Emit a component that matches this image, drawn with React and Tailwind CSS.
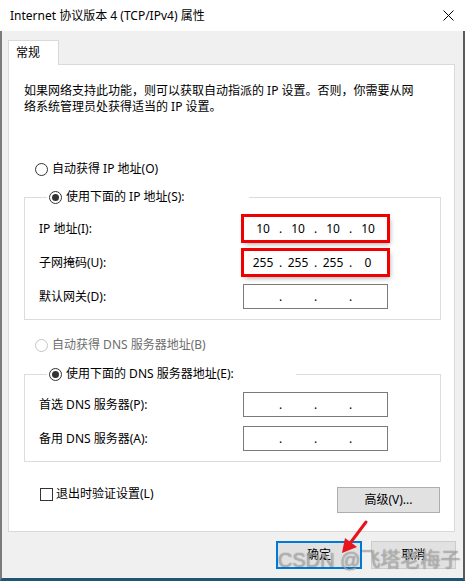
import React from 'react';

function Radio({ checked, disabled }) {
  return (
    <span
      className={
        'w-[13px] h-[13px] rounded-full border bg-white flex items-center justify-center shrink-0 ' +
        (disabled ? 'border-[#c4c4c4]' : 'border-[#333333]')
      }
    >
      {checked && <span className="w-[7px] h-[7px] rounded-full bg-[#333333]" />}
    </span>
  );
}

function IpBox({ values, red }) {
  const segs = values || ['', '', '', ''];
  return (
    <div
      className={
        'w-[145px] h-[25px] border border-[#7a7a7a] bg-white flex items-center px-[4px] ' +
        (red ? 'outline-3 outline-[#f00000] -outline-offset-1 shadow-[2px_3px_5px_rgba(0,0,0,0.35)]' : '')
      }
    >
      {segs.map((v, i) => (
        <React.Fragment key={i}>
          <span className="w-[30px] text-center leading-[16px]">{v}</span>
          {i < 3 && <span className="w-[5px] text-center leading-[16px]">.</span>}
        </React.Fragment>
      ))}
    </div>
  );
}

function Row({ label, values, red }) {
  return (
    <div className="flex items-center h-[25px]">
      <span className="w-[204px] leading-[16px]">{label}</span>
      <IpBox values={values} red={red} />
    </div>
  );
}

export default function App() {
  return (
    <div className="w-[465px] h-[581px] flex flex-col bg-[#f0f0f0] text-[12px] text-black font-['Noto_Sans','Noto_Sans_CJK_SC',sans-serif] relative overflow-hidden">
      <div className="h-[31px] bg-white flex items-center justify-between pl-[10px] pr-[11px] shrink-0">
        <span className="leading-[16px]">Internet 协议版本 4 (TCP/IPv4) 属性</span>
        <svg width="11" height="11" viewBox="0 0 11 11">
          <path d="M0.5 0.5 L10.5 10.5 M10.5 0.5 L0.5 10.5" stroke="#000" strokeWidth="1" />
        </svg>
      </div>

      <div className="flex-1 flex flex-col border-l-2 border-r-2 border-b-[3px] border-l-[#7b7b7b] border-r-[#5a5a5a] border-b-[#1f5473] pl-[6px] pr-[8px]">
        <div className="mt-[9px] w-[51px] h-[25px] -mb-px relative z-10 bg-white border border-b-0 border-[#d9d9d9] pl-[7px] pt-[4px] leading-[16px]">
          常规
        </div>

        <div className="w-[447px] h-[468px] border border-[#d9d9d9] bg-white pl-[15px] pt-[18px] flex flex-col">
          <p className="leading-[16px]">
            如果网络支持此功能，则可以获取自动指派的 IP 设置。否则，你需要从网
            <br />
            络系统管理员处获得适当的 IP 设置。
          </p>

          <div className="mt-[46px] ml-[11px] h-[16px] flex items-center gap-[4px]">
            <Radio />
            <span className="leading-[16px]">自动获得 IP 地址(O)</span>
          </div>

          <fieldset className="mt-[12px] w-[417px] border border-[#dcdcdc] pl-[14px] pt-[11px] pb-[10px]">
            <legend className="ml-[8px] w-[202px] h-[16px] pl-[2px] flex items-center gap-[4px] bg-white">
              <Radio checked />
              <span className="leading-[16px]">使用下面的 IP 地址(S):</span>
            </legend>
            <div className="flex flex-col gap-[9px]">
              <Row label="IP 地址(I):" values={['10', '10', '10', '10']} red />
              <Row label="子网掩码(U):" values={['255', '255', '255', '0']} red />
              <Row label="默认网关(D):" />
            </div>
          </fieldset>

          <div className="mt-[17px] ml-[11px] h-[16px] flex items-center gap-[4px]">
            <Radio disabled />
            <span className="leading-[16px] text-[#6d6d6d]">自动获得 DNS 服务器地址(B)</span>
          </div>

          <fieldset className="mt-[13px] w-[417px] border border-[#dcdcdc] pl-[14px] pt-[10px] pb-[10px]">
            <legend className="ml-[8px] w-[249px] h-[16px] pl-[2px] flex items-center gap-[4px] bg-white">
              <Radio checked />
              <span className="leading-[16px]">使用下面的 DNS 服务器地址(E):</span>
            </legend>
            <div className="flex flex-col gap-[9px]">
              <Row label="首选 DNS 服务器(P):" />
              <Row label="备用 DNS 服务器(A):" />
            </div>
          </fieldset>

          <div className="mt-[24px] w-[416px] flex justify-between items-start">
            <div className="ml-[16px] h-[16px] flex items-center gap-[3px]">
              <span className="w-[13px] h-[13px] border border-[#333333] bg-white shrink-0" />
              <span className="leading-[16px]">退出时验证设置(L)</span>
            </div>
            <button className="mt-px w-[103px] h-[26px] border border-[#adadad] bg-[#e1e1e1] leading-[16px]">
              高级(V)...
            </button>
          </div>
        </div>

        <div className="mt-[9px] flex justify-end gap-[9px] -mr-px">
          <button className="w-[86px] h-[28px] border-2 border-[#0078d7] bg-[#e1e1e1] leading-[16px]">确定</button>
          <button className="w-[85px] h-[28px] border border-[#cccccc] bg-[#e1e1e1] leading-[16px]">取消</button>
        </div>
      </div>

      <div className="absolute left-[278px] top-[548px] text-[20px] leading-[24px] text-[rgba(255,255,255,0.55)] font-['Liberation_Sans','Noto_Sans_CJK_SC',sans-serif] [text-shadow:0_0_1px_rgba(0,0,0,0.7)] pointer-events-none whitespace-nowrap">
        CSDN @飞塔老梅子
      </div>

      <svg className="absolute left-0 top-0 pointer-events-none" width="465" height="581">
        <line x1="366" y1="522" x2="351" y2="542" stroke="#e8141b" strokeWidth="3" strokeLinecap="round" />
        <polygon points="342,553 345,538 357,547" fill="#e8141b" />
      </svg>
    </div>
  );
}
